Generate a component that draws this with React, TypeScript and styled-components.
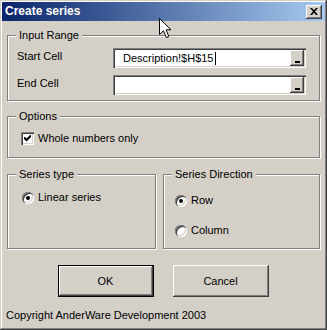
import React from 'react';
import styled, { createGlobalStyle } from 'styled-components';

const Global = createGlobalStyle`
  html, body { margin: 0; padding: 0; background: #D4D0C8; }
  body {
    font-family: "Liberation Sans", Arial, sans-serif;
    font-size: 11px;
    color: #000;
    -webkit-font-smoothing: none;
  }
`;

const raised = `
  box-shadow: inset -1px -1px #404040, inset 1px 1px #ffffff,
    inset -2px -2px #808080, inset 2px 2px #D4D0C8;
`;
const sunken = `
  box-shadow: inset 1px 1px #808080, inset 2px 2px #404040,
    inset -1px -1px #ffffff, inset -2px -2px #D4D0C8;
`;

const Window = styled.div`
  position: relative;
  width: 327px;
  height: 330px;
  box-sizing: border-box;
  padding: 2px;
  background: #D4D0C8;
  box-shadow: inset -1px -1px #404040, inset 1px 1px #D4D0C8,
    inset -2px -2px #808080, inset 2px 2px #ffffff;
  display: flex;
  flex-direction: column;
  overflow: hidden;
`;

const TitleBar = styled.div`
  height: 19px;
  display: flex;
  align-items: center;
  justify-content: space-between;
  padding: 0 3px 0 3px;
  background: linear-gradient(to right, #0A246A, #A6CAF0);
`;

const TitleText = styled.span`
  color: #fff;
  font-weight: bold;
  font-size: 12px;
  line-height: 19px;
`;

const CloseButton = styled.div`
  width: 16px;
  height: 14px;
  box-sizing: border-box;
  background: #D4D0C8;
  ${raised}
  display: flex;
  align-items: center;
  justify-content: center;
`;

const Body = styled.div`
  display: flex;
  flex-direction: column;
  padding: 14px 5px 0 5px;
`;

const Group = styled.div<{ $mt?: number; $pb: number }>`
  display: flex;
  flex-direction: column;
  margin-top: ${(p) => p.$mt ?? 0}px;
  padding-bottom: ${(p) => p.$pb}px;
  border: 1px solid #808080;
  box-shadow: inset 1px 1px #ffffff, 1px 1px #ffffff;
  box-sizing: border-box;
`;

const Legend = styled.span`
  align-self: flex-start;
  margin: -7px 0 0 8px;
  padding: 0 3px;
  line-height: 13px;
  background: #D4D0C8;
`;

const FieldGrid = styled.div`
  display: grid;
  grid-template-columns: 96px 193px;
  row-gap: 7px;
  align-items: center;
  margin: 6px 0 0 9px;
`;

const Label = styled.span`
  line-height: 13px;
  margin-top: -3px;
`;

const Field = styled.div`
  height: 20px;
  box-sizing: border-box;
  background: #fff;
  ${sunken}
  display: flex;
  align-items: center;
  padding: 2px 2px 2px 10px;
`;

const FieldText = styled.span`
  line-height: 13px;
  white-space: nowrap;
`;

const Caret = styled.span`
  width: 1px;
  height: 13px;
  background: #000;
  margin-left: 1px;
`;

const PickButton = styled.div`
  margin-left: auto;
  width: 14px;
  height: 16px;
  box-sizing: border-box;
  background: #D4D0C8;
  ${raised}
  display: flex;
  align-items: flex-end;
  justify-content: center;
  padding-bottom: 3px;
`;

const PickBar = styled.span`
  width: 5px;
  height: 2px;
  background: #000;
`;

const OptionRow = styled.div<{ $mt: number; $ml: number }>`
  display: flex;
  align-items: center;
  gap: 4px;
  margin: ${(p) => p.$mt}px 0 0 ${(p) => p.$ml}px;
  height: 13px;
  line-height: 13px;
`;

const CheckBox = styled.div`
  width: 13px;
  height: 13px;
  box-sizing: border-box;
  background: #fff;
  ${sunken}
  display: flex;
  align-items: center;
  justify-content: center;
`;

const Radio = styled.div`
  width: 12px;
  height: 12px;
  border-radius: 50%;
  box-sizing: border-box;
  background: #fff;
  ${sunken}
  display: flex;
  align-items: center;
  justify-content: center;
`;

const RadioDot = styled.span`
  width: 4px;
  height: 4px;
  border-radius: 50%;
  background: #000;
`;

const GroupRow = styled.div`
  display: grid;
  grid-template-columns: 149px 157px;
  column-gap: 7px;
  height: 75px;
  margin-top: 16px;
`;

const ButtonRow = styled.div`
  display: flex;
  justify-content: center;
  gap: 19px;
  margin-top: 16px;
  padding-right: 1px;
`;

const PushButton = styled.div<{ $default?: boolean }>`
  width: 96px;
  height: 32px;
  box-sizing: border-box;
  background: #D4D0C8;
  display: flex;
  align-items: center;
  justify-content: center;
  border: ${(p) => (p.$default ? '1px solid #000' : 'none')};
  ${raised}
`;

const Copyright = styled.div`
  margin: 12px 0 0 -1px;
  line-height: 13px;
`;

const Cursor = styled.svg`
  position: absolute;
  left: 159px;
  top: 18px;
`;

function CloseGlyph() {
  return (
    <svg width="8" height="7" viewBox="0 0 8 7">
      <path d="M0 0h2l2 2.2L6 0h2L5 3.5 8 7H6L4 4.8 2 7H0l3-3.5z" fill="#000" />
    </svg>
  );
}

function CheckGlyph() {
  return (
    <svg width="7" height="7" viewBox="0 0 7 7">
      <path d="M0 2.5 L2.5 5 L7 0.5" fill="none" stroke="#000" strokeWidth="2" />
    </svg>
  );
}

function RadioOption({ label, checked, mt, ml }: { label: string; checked: boolean; mt: number; ml: number }) {
  return (
    <OptionRow $mt={mt} $ml={ml}>
      <Radio>{checked && <RadioDot />}</Radio>
      <span>{label}</span>
    </OptionRow>
  );
}

export default function App() {
  return (
    <>
      <Global />
      <Window>
        <TitleBar>
          <TitleText>Create series</TitleText>
          <CloseButton>
            <CloseGlyph />
          </CloseButton>
        </TitleBar>
        <Body>
          <Group $pb={5}>
            <Legend>Input Range</Legend>
            <FieldGrid>
              <Label>Start Cell</Label>
              <Field>
                <FieldText>Description!$H$15</FieldText>
                <Caret />
                <PickButton>
                  <PickBar />
                </PickButton>
              </Field>
              <Label>End Cell</Label>
              <Field>
                <PickButton>
                  <PickBar />
                </PickButton>
              </Field>
            </FieldGrid>
          </Group>

          <Group $mt={15} $pb={12}>
            <Legend>Options</Legend>
            <OptionRow $mt={9} $ml={13}>
              <CheckBox>
                <CheckGlyph />
              </CheckBox>
              <span>Whole numbers only</span>
            </OptionRow>
          </Group>

          <GroupRow>
            <Group $pb={0}>
              <Legend>Series type</Legend>
              <RadioOption label="Linear series" checked mt={10} ml={14} />
            </Group>
            <Group $pb={0}>
              <Legend>Series Direction</Legend>
              <RadioOption label="Row" checked mt={13} ml={11} />
              <RadioOption label="Column" checked={false} mt={17} ml={11} />
            </Group>
          </GroupRow>

          <ButtonRow>
            <PushButton $default>OK</PushButton>
            <PushButton>Cancel</PushButton>
          </ButtonRow>

          <Copyright>Copyright AnderWare Development 2003</Copyright>
        </Body>
        <Cursor width="13" height="21" viewBox="0 0 13 21">
          <path
            d="M0.5 0.5 L0.5 16.5 L4.5 12.8 L7.3 19.5 L9.8 18.5 L7.1 11.8 L12 11.8 Z"
            fill="#fff"
            stroke="#000"
            strokeWidth="1"
            strokeLinejoin="miter"
          />
        </Cursor>
      </Window>
    </>
  );
}
